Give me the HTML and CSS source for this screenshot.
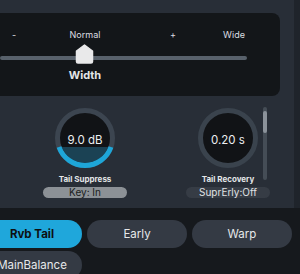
FILE: index.html
```html
<!DOCTYPE html>
<html lang="en">

<head>
    <meta charset="UTF-8">
    <meta name="viewport" content="width=device-width, initial-scale=1.0">
    <title>Reverb Tail</title>

    <link rel="stylesheet" href="styles.css">
</head>

<body>
    <div class="plugin">
        <div class="main">
            <div class="content">
                <div class="width-panel">
                    <div class="slider">
                        <div class="scale">
                            <span class="mark" style="left: 14px">-</span>
                            <span class="mark" style="left: 85px">Normal</span>
                            <span class="mark" style="left: 173px">+</span>
                            <span class="mark" style="left: 234px">Wide</span>
                        </div>
                        <div class="track">
                            <svg class="thumb" style="left: 75px" width="19" height="20" viewBox="0 0 19 20">
                                <path d="M1.5 7 L9.5 1 L17.5 7 L17.5 17.5 Q17.5 19 16 19 L3 19 Q1.5 19 1.5 17.5 Z"
                                    fill="#e9e9ea" stroke="#e9e9ea" stroke-width="1.5" stroke-linejoin="round" />
                            </svg>
                        </div>
                        <div class="slider-name">Width</div>
                    </div>
                </div>

                <div class="knobs">
                    <div class="knob-col">
                        <div class="knob">
                            <svg width="60" height="60" viewBox="0 0 60 60">
                                <defs>
                                    <clipPath id="inner">
                                        <circle cx="30" cy="30" r="25" />
                                    </clipPath>
                                </defs>
                                <circle cx="30" cy="30" r="27.5" fill="#111316" stroke="#3c4550" stroke-width="5" />
                                <rect x="0" y="39" width="60" height="21" fill="#1b4254" clip-path="url(#inner)" />
                                <path d="M4.02 39 A27.5 27.5 0 0 0 55.98 39" fill="none" stroke="#1ea6d8" stroke-width="5" />
                            </svg>
                            <span class="value">9.0 dB</span>
                        </div>
                        <div class="knob-name">Tail Suppress</div>
                        <div class="chip chip-on">Key: In</div>
                    </div>
                    <div class="knob-col">
                        <div class="knob">
                            <svg width="60" height="60" viewBox="0 0 60 60">
                                <circle cx="30" cy="30" r="27.5" fill="#111316" stroke="#3a434d" stroke-width="5" />
                            </svg>
                            <span class="value">0.20 s</span>
                        </div>
                        <div class="knob-name">Tail Recovery</div>
                        <div class="chip">SuprErly:Off</div>
                    </div>
                    <div class="scrollbar">
                        <div class="scroll-thumb"></div>
                    </div>
                </div>
            </div>
            <div class="edge"></div>
        </div>

        <div class="tabs">
            <button class="tab active">Rvb Tail</button>
            <button class="tab">Early</button>
            <button class="tab">Warp</button>
            <button class="tab">MainBalance</button>
        </div>
    </div>
</body>

</html>
```

FILE: styles.css
```css
body {
    margin: 0;
    background: #16191d;
    font-family: Inter, "Noto Sans", sans-serif;
    color: #e4e6e8;
}

.plugin {
    width: 300px;
    height: 274px;
    overflow: hidden;
}

.main {
    display: flex;
    height: 208px;
    background: #282e37;
}

.content {
    width: 294px;
    padding-top: 13px;
}

.edge {
    width: 6px;
    background: #1f242b;
}

.width-panel {
    margin-left: -20px;
    padding: 16px 0 0 20px;
    width: 280px;
    height: 67px;
    background: #131619;
    border-radius: 8px;
}

.slider {
    width: 247px;
}

.scale {
    position: relative;
    height: 12px;
}

.mark {
    position: absolute;
    top: 0;
    transform: translateX(-50%);
    font-size: 9px;
    line-height: 12px;
    color: #dcdee1;
}

.track {
    position: relative;
    height: 4px;
    margin-top: 15px;
    background: #58616b;
    border-radius: 2px;
}

.thumb {
    position: absolute;
    top: -12px;
}

.slider-name {
    width: 170px;
    margin-top: 8px;
    text-align: center;
    font-size: 11px;
    font-weight: 700;
    line-height: 14px;
}

.knobs {
    position: relative;
    display: flex;
    gap: 53px;
    padding-left: 40px;
    padding-top: 12px;
}

.knob-col {
    width: 90px;
    display: flex;
    flex-direction: column;
    align-items: center;
}

.knob {
    display: grid;
    place-items: center;
    width: 60px;
    height: 60px;
}

.knob svg,
.knob .value {
    grid-area: 1 / 1;
}

.value {
    margin-top: 4px;
    font-size: 11.5px;
    color: #eceef0;
}

.knob-name {
    margin-top: 6px;
    font-size: 8px;
    font-weight: 700;
    line-height: 10px;
}

.chip {
    width: 84px;
    height: 11px;
    margin-top: 3px;
    border-radius: 6px;
    background: #363c45;
    font-size: 10px;
    line-height: 11px;
    text-align: center;
    color: #e0e2e4;
}

.chip-on {
    background: #8c9196;
    color: #1b1d20;
}

.scrollbar {
    position: absolute;
    left: 263px;
    top: 11px;
    width: 4px;
    height: 73px;
    border-radius: 2px;
    background: #454d56;
}

.scroll-thumb {
    margin-top: 4px;
    height: 22px;
    border-radius: 2px;
    background: #8b929a;
}

.tabs {
    display: grid;
    grid-template-columns: repeat(3, 100px);
    column-gap: 5px;
    row-gap: 3px;
    margin-left: -18px;
    padding-top: 12px;
}

.tab {
    height: 28px;
    border: none;
    border-radius: 14px;
    background: #343a44;
    color: #e6e8ea;
    font-family: inherit;
    font-size: 11.5px;
    padding: 0;
}

.active {
    background: #1fa7db;
    color: #0d0f11;
    font-weight: 700;
}
```
